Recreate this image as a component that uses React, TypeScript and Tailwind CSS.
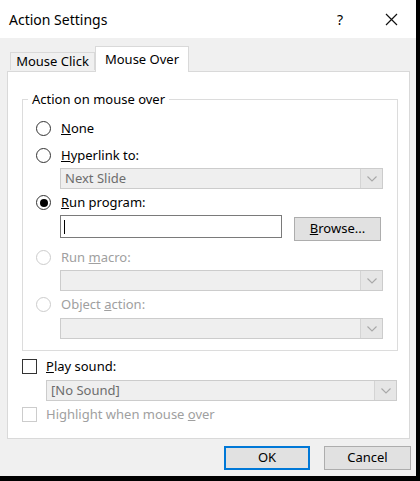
import React from 'react'

const font = { fontFamily: '"Noto Sans", "Open Sans", sans-serif' }

function Radio({ checked, disabled }: { checked?: boolean; disabled?: boolean }) {
  return (
    <span
      className={
        'flex h-[15px] w-[15px] shrink-0 items-center justify-center rounded-full border bg-white ' +
        (disabled ? 'border-[#cccccc]' : 'border-[#333333]')
      }
    >
      {checked && <span className="h-[8px] w-[8px] rounded-full bg-black" />}
    </span>
  )
}

function Check({ disabled }: { disabled?: boolean }) {
  return (
    <span
      className={
        'block h-[15px] w-[15px] shrink-0 border bg-white ' +
        (disabled ? 'border-[#cccccc]' : 'border-[#333333]')
      }
    />
  )
}

function Chevron() {
  return (
    <svg width="12" height="8" viewBox="0 0 12 8">
      <path d="M1.5 1.5 L6 6 L10.5 1.5" fill="none" stroke="#a8a8a8" strokeWidth="1.1" />
    </svg>
  )
}

function DisabledSelect({ value, className }: { value?: string; className: string }) {
  return (
    <div className={'flex h-[21px] items-stretch border border-[#cccccc] bg-[#efefef] ' + className}>
      <div className="flex flex-1 items-center pl-[4px] text-[13px] text-[#6d6d6d]">{value}</div>
      <div className="flex w-[22px] items-center justify-center border-l border-[#d4d4d4] bg-[#e6e6e6]">
        <Chevron />
      </div>
    </div>
  )
}

function Label({ children, disabled }: { children: React.ReactNode; disabled?: boolean }) {
  return (
    <span className={'text-[13px] leading-none ' + (disabled ? 'text-[#a0a0a0]' : 'text-black')}>
      {children}
    </span>
  )
}

export default function App() {
  return (
    <div className="flex h-[481px] w-[420px] items-start bg-black" style={font}>
      <div className="flex h-[476px] w-[416px] flex-col bg-[#f0f0f0]">
        {/* title bar */}
        <div className="flex h-[38px] shrink-0 items-center bg-white pl-[9px]">
          <span className="text-[14px] text-black">Action Settings</span>
          <span className="ml-auto mr-[42px] text-[14px] text-black">?</span>
          <svg className="mr-[18px]" width="13" height="13" viewBox="0 0 13 13">
            <path d="M1 1 L12 12 M12 1 L1 12" stroke="#111" strokeWidth="1.2" />
          </svg>
        </div>

        {/* tabs */}
        <div className="relative z-10 flex h-[33px] shrink-0 items-end pl-[10px]">
          <div className="mb-[1px] flex h-[18px] w-[85px] items-center justify-center border border-b-0 border-[#d9d9d9] bg-[#f0f0f0] text-[13px]">
            Mouse Click
          </div>
          <div className="-mb-[1px] flex h-[26px] w-[94px] items-start justify-center border border-b-0 border-[#d9d9d9] bg-white pt-[3px] text-[13px]">
            Mouse Over
          </div>
        </div>

        {/* panel */}
        <div className="ml-[7px] flex h-[368px] w-[403px] flex-col border border-[#d9d9d9] bg-white">
          <fieldset className="ml-[14px] mt-[19px] h-[260px] w-[376px] border border-[#dcdcdc] px-[13px]">
            <legend className="-ml-[8px] px-[4px] text-[13px] leading-[16px]">Action on mouse over</legend>

            <div className="mt-[14px] flex items-center gap-[10px]">
              <Radio />
              <Label><u>N</u>one</Label>
            </div>
            <div className="mt-[12px] flex items-center gap-[10px]">
              <Radio />
              <Label><u>H</u>yperlink to:</Label>
            </div>
            <DisabledSelect value="Next Slide" className="ml-[24px] mt-[5px] w-[323px]" />
            <div className="mt-[6px] flex items-center gap-[10px]">
              <Radio checked />
              <Label><u>R</u>un program:</Label>
            </div>
            <div className="ml-[24px] mt-[5px] flex items-start">
              <div className="flex h-[23px] w-[222px] items-center border border-[#7a7a7a] bg-white pl-[3px]">
                <span className="h-[14px] w-[1px] bg-black" />
              </div>
              <div className="ml-[12px] mt-[2px] flex h-[24px] w-[87px] items-center justify-center border border-[#adadad] bg-[#e1e1e1] text-[13px]">
                <u>B</u>rowse...
              </div>
            </div>
            <div className="mt-[9px] flex items-center gap-[10px]">
              <Radio disabled />
              <Label disabled>Run <u>m</u>acro:</Label>
            </div>
            <DisabledSelect className="ml-[24px] mt-[5px] w-[323px]" />
            <div className="mt-[6px] flex items-center gap-[10px]">
              <Radio disabled />
              <Label disabled>Object <u>a</u>ction:</Label>
            </div>
            <DisabledSelect className="ml-[24px] mt-[6px] w-[323px]" />
          </fieldset>

          <div className="ml-[14px] mt-[8px] flex items-center gap-[9px]">
            <Check />
            <Label><u>P</u>lay sound:</Label>
          </div>
          <DisabledSelect value="[No Sound]" className="ml-[38px] mt-[6px] w-[351px]" />
          <div className="ml-[14px] mt-[6px] flex items-center gap-[9px]">
            <Check disabled />
            <Label disabled>Highlight when mouse <u>o</u>ver</Label>
          </div>
        </div>

        {/* buttons */}
        <div className="ml-[224px] mt-[7px] flex gap-[14px]">
          <div className="flex h-[24px] w-[86px] items-center justify-center border-2 border-[#0078d7] bg-[#e1e1e1] text-[13px]">
            OK
          </div>
          <div className="flex h-[24px] w-[87px] items-center justify-center border border-[#adadad] bg-[#e1e1e1] text-[13px]">
            Cancel
          </div>
        </div>
      </div>
    </div>
  )
}
